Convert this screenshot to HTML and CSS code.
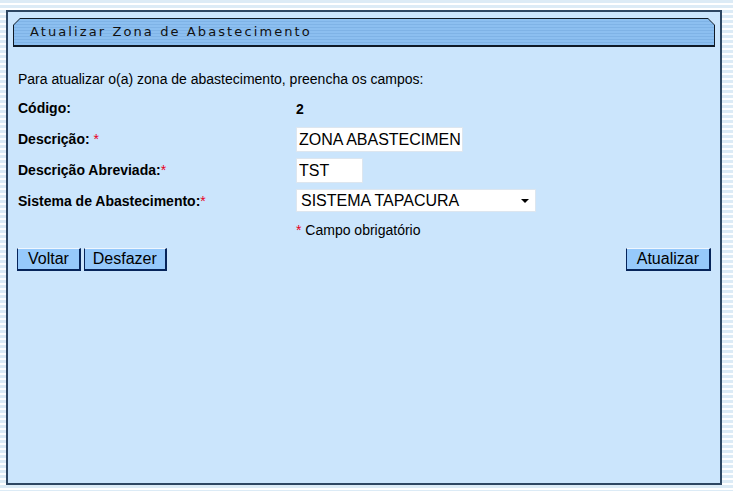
FILE: index.html
```html
<!DOCTYPE html>
<html lang="pt-br">
<head>
    <meta charset="UTF-8">
    <title>Atualizar Zona de Abastecimento</title>
    <link rel="stylesheet" href="styles.css">
</head>
<body>
    <div class="panel">
        <div class="titulo">
            <div class="titulo-fundo">Atualizar Zona de Abastecimento</div>
        </div>

        <form class="form-zona">
            <p class="intro">Para atualizar o(a) zona de abastecimento, preencha os campos:</p>

            <div class="campos">
                <label class="rotulo">Código:</label>
                <span class="valor"><b>2</b></span>

                <label class="rotulo" for="descricao">Descrição: <span class="obrig">*</span></label>
                <span class="valor"><input type="text" id="descricao" class="txt-desc" value="ZONA ABASTECIMENTO TESTE"></span>

                <label class="rotulo" for="abreviada">Descrição Abreviada:<span class="obrig">*</span></label>
                <span class="valor"><input type="text" id="abreviada" class="txt-abrev" value="TST"></span>

                <label class="rotulo" for="sistema">Sistema de Abastecimento:<span class="obrig">*</span></label>
                <span class="valor">
                    <span class="combo">
                        <select id="sistema">
                            <option>SISTEMA TAPACURA</option>
                        </select>
                    </span>
                </span>

                <span></span>
                <span class="nota"><span class="obrig">*</span> Campo obrigatório</span>
            </div>

            <div class="botoes">
                <div>
                    <button type="button" class="botao">Voltar</button>
                    <button type="button" class="botao">Desfazer</button>
                </div>
                <button type="button" class="botao">Atualizar</button>
            </div>
        </form>
    </div>
</body>
</html>
```

FILE: styles.css
```css
body {
    margin: 0;
    font-family: "Liberation Sans", Arial, sans-serif;
    font-size: 14px;
    color: #000;
    background: repeating-linear-gradient(to bottom, #dcebf6 0, #dcebf6 3px, #ffffff 3px, #ffffff 5px);
    height: 491px;
    overflow: hidden;
}

.panel {
    margin: 10px 0 0 6px;
    width: 712px;
    height: 471px;
    border: 2px solid #2d4662;
    background-color: #cbe5fc;
}

/* barra do titulo com cantos chanfrados */
.titulo {
    margin: 6px 5px 0 5px;
    height: 29px;
    background-color: #0f1a26;
    clip-path: polygon(7px 0, calc(100% - 7px) 0, 100% 7px, 100% 100%, 0 100%, 0 7px);
    padding: 1px 1px 2px 1px;
    box-sizing: border-box;
}

.titulo-fundo {
    height: 100%;
    background: repeating-linear-gradient(to bottom, #8cbff0 0, #8cbff0 2px, #7fb3e6 2px, #7fb3e6 3px);
    clip-path: polygon(6px 0, calc(100% - 6px) 0, 100% 6px, 100% 100%, 0 100%, 0 6px);
    font-family: "DejaVu Sans", Verdana, sans-serif;
    font-size: 13px;
    letter-spacing: 2.1px;
    line-height: 26px;
    padding-left: 16px;
    color: #111;
}

.form-zona {
    padding: 0 9px;
}

.intro {
    margin: 24px 0 0 1px;
    line-height: 16px;
}

.campos {
    display: grid;
    grid-template-columns: 278px 1fr;
    grid-auto-rows: 31px;
    margin-top: 6px;
    padding-left: 1px;
}

.rotulo {
    font-weight: bold;
    line-height: 30px;
}

.valor {
    display: flex;
    align-items: center;
}

.nota {
    line-height: 26px;
}

.obrig {
    color: #e8001c;
    font-weight: normal;
}

.valor input,
.combo select {
    font-family: "Liberation Sans", Arial, sans-serif;
    font-size: 16px;
    background: #fff;
    border: 1px solid #dde6ef;
    height: 25px;
    padding: 0 2px;
    box-sizing: border-box;
    color: #000;
}

.txt-desc {
    width: 167px;
}

.txt-abrev {
    width: 67px;
}

.combo {
    position: relative;
    display: inline-block;
    margin-top: -2px;
}

.combo select {
    -webkit-appearance: none;
    appearance: none;
    width: 240px;
    height: 23px;
    padding: 0 4px;
}

.combo::after {
    content: "";
    position: absolute;
    right: 7px;
    top: 10px;
    border-left: 4px solid transparent;
    border-right: 4px solid transparent;
    border-top: 4px solid #000;
}

.botoes {
    display: flex;
    justify-content: space-between;
}

.botao {
    font-family: "Liberation Sans", Arial, sans-serif;
    font-size: 16px;
    height: 23px;
    padding: 0 10px;
    background-color: #96c9fb;
    border: 1px solid #06245a;
    border-top-color: #eef6ff;
    border-right-width: 2px;
    border-bottom-width: 2px;
    color: #000;
    cursor: pointer;
}

.botao + .botao {
    margin-left: -1px;
    padding: 0 8px;
}
```
